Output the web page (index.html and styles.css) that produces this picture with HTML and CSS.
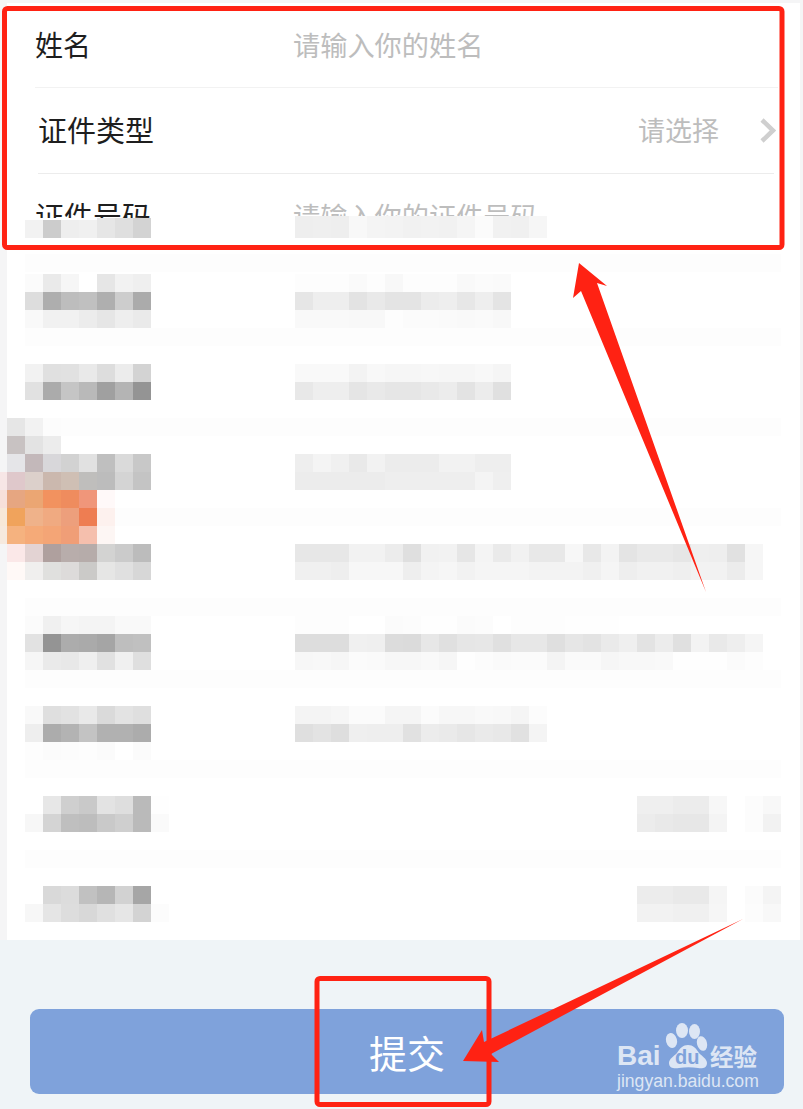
FILE: index.html
```html
<!DOCTYPE html>
<html lang="zh-CN">
<head>
<meta charset="utf-8">
<title>提交</title>
<link rel="stylesheet" href="styles.css">
</head>
<body>
<main class="page">
  <section class="card">
    <div class="row row-a">
      <span class="label">姓名</span>
      <span class="hint">请输入你的姓名</span>
    </div>
    <div class="row row-b">
      <span class="label">证件类型</span>
      <span class="hint hint-end">请选择</span>
      <svg class="chevron" viewBox="0 0 17 25" width="17" height="25"><polyline points="3,2 14,12.5 3,23"/></svg>
    </div>
    <div class="row row-c">
      <span class="label">证件号码</span>
      <span class="hint">请输入你的证件号码</span>
    </div>
  </section>
  <footer class="footer">
    <button class="submit" type="button">提交
      <svg class="watermark" viewBox="0 0 150 75" width="150" height="75">
        <text class="wm-bai" x="2" y="45">Bai</text>
        <ellipse cx="56.5" cy="20.5" rx="5.5" ry="7.5" transform="rotate(-15 56.5 20.5)"/>
        <ellipse cx="67" cy="10.5" rx="6" ry="7.5"/>
        <ellipse cx="79.5" cy="11.5" rx="5.5" ry="7.5"/>
        <ellipse cx="87" cy="23.5" rx="5" ry="7.5" transform="rotate(-15 87 23.5)"/>
        <path d="M73 25c5 0 8 3 11 8 3 3 8 6 8 10 0 5-5 6-9 5-6-1-13-1-19 0-5 1-10 0-10-5 0-4 5-7 8-10 3-5 6-8 11-8z"/>
        <text class="wm-du" x="60" y="44">du</text>
        <text class="wm-cn" x="95" y="46">经验</text>
        <text class="wm-url" x="2" y="67">jingyan.baidu.com</text>
      </svg>
    </button>
  </footer>
  <svg class="mosaic" id="mosaic" viewBox="0 0 803 1109" width="803" height="1109" aria-hidden="true"></svg>
  <svg class="marks" viewBox="0 0 803 1109" width="803" height="1109" aria-hidden="true">
    <rect x="4.5" y="8.5" width="777.5" height="239" rx="3"/>
    <rect x="317" y="978.5" width="172" height="126" rx="3"/>
    <polygon points="579,263 607,286 597,283 706,592 581,291 573,298"/>
    <polygon points="743,919 484,1042 482,1030 463,1061 499,1062 491,1054"/>
  </svg>
</main>
<script src="script.js"></script>
</body>
</html>
```
FILE: styles.css
```css
* { box-sizing: border-box; }
html, body { margin: 0; padding: 0; }
body {
  width: 803px;
  height: 1109px;
  overflow: hidden;
  background: #f5f5f6;
  font-family: "Noto Sans CJK SC", "Noto Sans", sans-serif;
}
.page {
  position: relative;
  display: flex;
  flex-direction: column;
  width: 803px;
  height: 1109px;
  padding-top: 3px;
}
.card {
  height: 937px;
  margin: 0 3px 0 7px;
  background: #fff;
}
.row {
  display: flex;
  align-items: center;
  overflow: hidden;
}
.row-a {
  height: 85px;
  margin: 0 22px 0 28px;
  padding-bottom: 2px;
  border-bottom: 1px solid #f2f2f2;
  font-size: 28px;
}
.row-b {
  height: 86px;
  margin: 0 26px 0 31px;
  padding-bottom: 3px;
  border-bottom: 1px solid #ececec;
  overflow: visible;
}
.row-c {
  height: 44px;
  margin: 0 22px 0 28px;
  align-items: flex-start;
  line-height: 82px;
}
.label {
  flex: none;
  color: #1e1e1e;
  font-size: 29px;
}
.row-a .label { font-size: 28px; width: 258px; }
.row-c .label { width: 258px; }
.hint {
  color: #bdbdbd;
  font-size: 27.2px;
}
.hint-end { margin-left: auto; font-size: 27px; }
.chevron {
  flex: none;
  margin: 3px -2px 0 40px;
}
.chevron polyline {
  fill: none;
  stroke: #cfcfcf;
  stroke-width: 4.5;
}
.footer {
  height: 169px;
  padding: 69px 19px 0 30px;
  background: #eff4f7;
}
.submit {
  position: relative;
  display: block;
  width: 100%;
  height: 85px;
  padding: 0;
  border: 0;
  border-radius: 9px;
  background: #7fa2db;
  color: #fff;
  font-family: inherit;
  font-size: 38px;
  line-height: 84px;
  text-align: center;
}
.watermark {
  position: absolute;
  left: 585px;
  top: 11px;
  fill: #dde6f4;
}
.watermark text { font-family: "Liberation Sans", sans-serif; }
.wm-bai { font-size: 28px; font-weight: 700; }
.watermark .wm-du { font-size: 20px; font-weight: 700; fill: #7fa2db; }
.watermark .wm-cn { font-family: "Noto Sans CJK SC", sans-serif; font-size: 23.5px; font-weight: 700; }
.wm-url { font-size: 17.6px; }
.mosaic, .marks {
  position: absolute;
  left: 0;
  top: 0;
  pointer-events: none;
}
.mosaic { filter: blur(0.4px); }
.marks rect {
  fill: none;
  stroke: #ff2213;
  stroke-width: 5;
}
.marks polygon { fill: #ff2213; }
```
FILE: script.js
```js
// Pixelated (censored) blocks: x, y, cell width, cell height, colour rows.
var bands = [254, 328, 418, 508, 598, 670, 760, 850];
var blocks = [
  [25, 220, 18, 18, ["f2 cc ee f0"]],
  [97, 218, 18, 20, ["e6 df d3"]],
  [295, 216, 18, 22, ["ee ef ee f8 f4 f3 f1 f2 f1 f5 fb f1 f0 f6"]],

  [25, 274, 18, 18, ["fb ea f6 ff e6 f2 ef", "dd ae bd c0 af cd ab", "f9 f1 f1 ec e6 ee ea"]],
  [295, 274, 18, 18, ["fd fd fd fa fd f8 fd fd fd f9 fb fa", "e6 ee ee e3 e9 e4 e4 ec ee e7 ee e4", "f9 f9 f9 f8 f8 fd fb fb fa f9 fa f8"]],

  [25, 364, 18, 18, ["f2 e0 e1 e9 dd ec d3", "e1 ab c5 b9 a0 b4 94"]],
  [295, 364, 18, 18, ["f9 f9 f9 f3 f8 f6 f6 f7 f6 f6 f8 f5", "e8 ee ee e5 e9 e6 e6 e9 ec e3 ec e0"]],

  [0, 472, 7, 18, ["f7e6e6", "f7e0da", "f7e8d8", "f6e9de"]],
  [7, 418, 18, 18, ["e6e6e6 f2f2f2 fcfcfc", "c8c2c2 e3e3e3 ececec"]],
  [7, 454, 18, 18, [
    "e5e5e8 c3b8ba d8d7da d2d2d2 e1e1e1 bfbfbf dadada c8c8c8",
    "dfc8cb dcd0cb cbb8ae cfbfb4 bfbebc bcbcbc d4d4d4 c4c4c4",
    "e6a681 eba673 f2925f ef8c5e f0967a fff9f9",
    "f0a35c efb28a f0aa81 ed9f7c ee7d52 fdf1ee",
    "f5b27f f5aa78 f4a576 f09e77 f5bfad fdf6f4",
    "fbe8e8 e3d3d3 afa09e b8adab b6acaa d3d3d2 cbcbcb bcbcbc",
    "fff9f7 f0efee e0e0de dddbda cbcac8 e6e6e5 e0e0e0 d7d7d7"
  ]],
  [295, 454, 18, 18, ["ee f4 f0 e9 f2 ec ec ec f2 f2 ee ee", "ec ec ec ec ec ee ee ee ee ee f4 ef"]],
  [295, 544, 18, 18, [
    "e7 e7 e7 f2 f2 ec df f1 f2 e6 f4 ea f1 e8 e8 f7 e8 f3 e4 e9 e9 e6 ef ee e1 f6",
    "f0 f0 ee f7 f7 f7 ee f4 f6 f2 f5 f5 f5 f3 f3 f3 f0 f5 ee f1 f1 ef f2 f2 ec f6"
  ]],

  [25, 616, 18, 18, ["fb f0 f6 f4 f4 f9 f9", "e2 94 ac aa a5 be c0", "f6 ea e8 ef e1 f0 df"]],
  [295, 616, 18, 18, [
    "fd fd fd ff ff fb fc fe fe fb fc ff fd fd fd fe fe fe ff ff ff ff ff ff ff ff",
    "dd dd dd f0 ef dc db e7 e0 e6 e7 e0 e7 e7 df e6 e3 ea ef e3 ec e0 f3 e9 ee f5",
    "f7 f8 f6 fb fa f7 f7 f9 f6 fe fc fa fb fb f4 fa fa f6 f8 f8 f9 fe fe fe fb fd"
  ]],

  [25, 706, 18, 18, ["f9 df e2 e9 da e3 df", "ee ac b3 c3 b1 b1 ac", "fd fb fc fd fb ff fb"]],
  [295, 706, 18, 18, ["f4 f4 f6 fb fb f5 f5 fb f7 f7 f9 f8 f5 fc", "df e3 de ef ee ee e1 ec ea e6 ea e8 e1 f4"]],

  [25, 796, 18, 18, ["ff e7 cf c9 e3 de ba fe", "f7 d4 bf bd c9 cf ba fa"]],
  [637, 796, 18, 18, ["ef ef ec ec f7", "ec e9 e7 e7 f4"]],
  [745, 796, 18, 18, ["fc f8", "fc f2"]],

  [25, 886, 18, 18, ["ff d9 dc c1 b6 d2 a6 ff", "f7 e5 dd d8 e0 e6 d3 fc"]],
  [637, 886, 18, 18, ["ec ec e9 e9 f5", "f2 f2 f0 f0 f6"]],
  [745, 886, 18, 18, ["fb f4", "fc f8"]]
];

var svg = document.getElementById("mosaic");
var NS = "http://www.w3.org/2000/svg";

function cell(x, y, w, h, colour) {
  var r = document.createElementNS(NS, "rect");
  r.setAttribute("x", x);
  r.setAttribute("y", y);
  r.setAttribute("width", w);
  r.setAttribute("height", h);
  r.setAttribute("fill", colour);
  r.setAttribute("shape-rendering", "crispEdges");
  svg.appendChild(r);
}

bands.forEach(function (y) { cell(25, y, 756, 18, "#fdfdfd"); });

blocks.forEach(function (b) {
  b[4].forEach(function (row, j) {
    row.split(" ").forEach(function (c, i) {
      var hex = c.length === 2 ? c + c + c : c;
      cell(b[0] + i * b[2], b[1] + j * b[3], b[2], b[3], "#" + hex);
    });
  });
});
```
